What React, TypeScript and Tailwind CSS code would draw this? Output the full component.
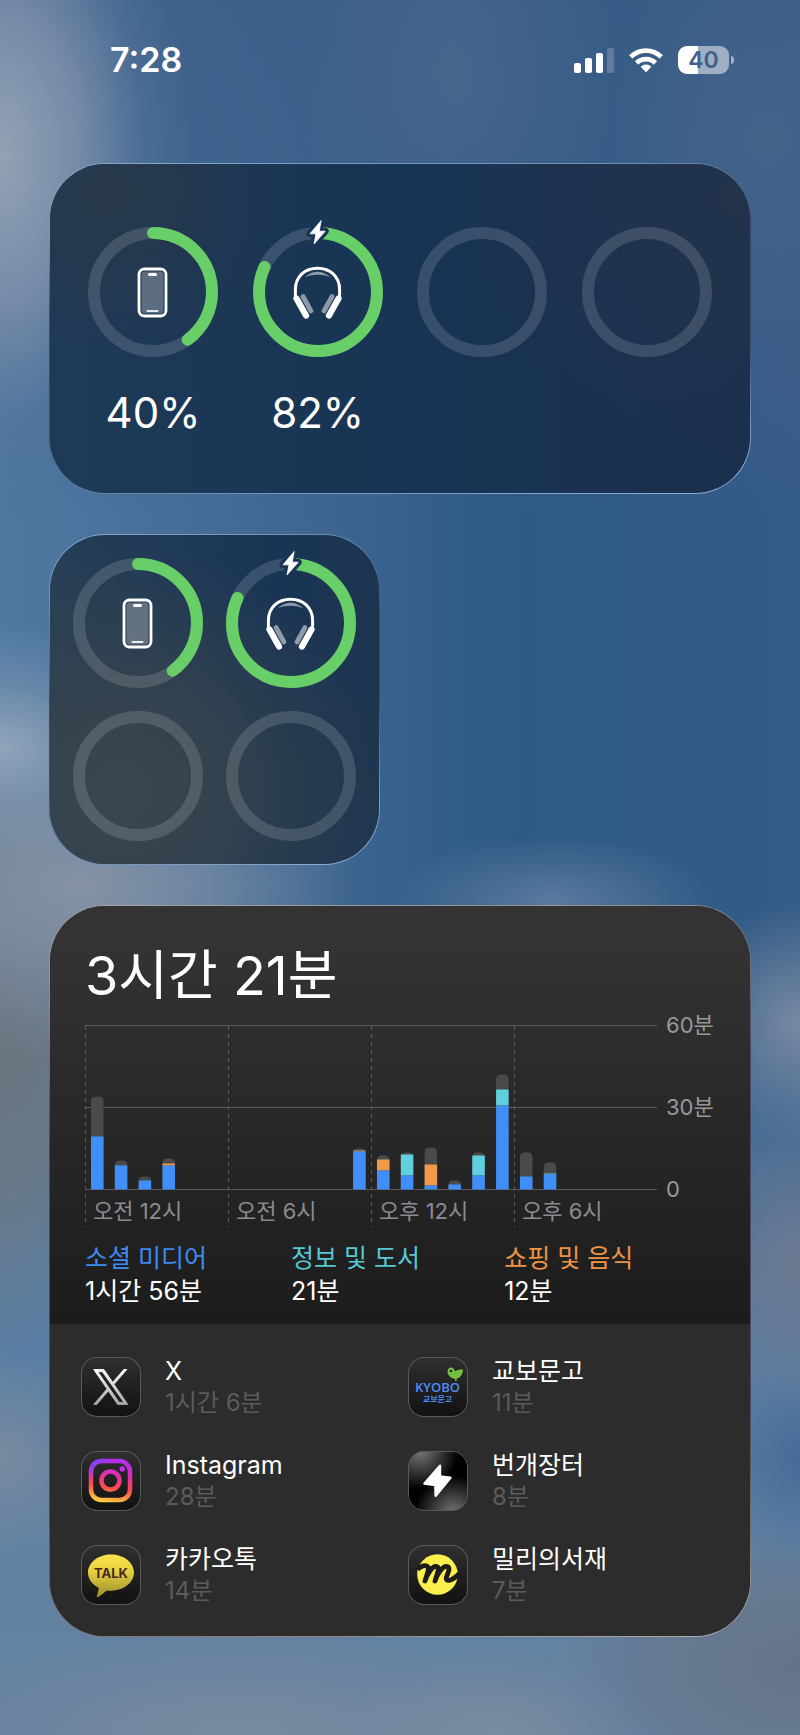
import type { ReactNode } from "react";

type Device = { id: string; level: number; charging?: boolean; icon: "phone" | "headphones" };

const devices: (Device | null)[] = [
  { id: "phone", level: 40, icon: "phone" },
  { id: "headphones", level: 82, charging: true, icon: "headphones" },
  null,
  null,
];

// heights in chart units, stacked from the baseline up
type Bar = { hour: number; social: number; info: number; shopping: number; other: number };

const bars: Bar[] = [
  { hour: 0, social: 53, info: 0, shopping: 0, other: 40 },
  { hour: 1, social: 24, info: 0, shopping: 0, other: 5 },
  { hour: 2, social: 9, info: 0, shopping: 0, other: 4 },
  { hour: 3, social: 24, info: 0, shopping: 2, other: 5 },
  { hour: 11, social: 38, info: 0, shopping: 1, other: 2 },
  { hour: 12, social: 19, info: 0, shopping: 11, other: 4 },
  { hour: 13, social: 14, info: 21, shopping: 0, other: 2 },
  { hour: 14, social: 4, info: 0, shopping: 21, other: 17 },
  { hour: 15, social: 5, info: 0, shopping: 0, other: 4 },
  { hour: 16, social: 14, info: 20, shopping: 0, other: 3 },
  { hour: 17, social: 84, info: 16, shopping: 0, other: 15 },
  { hour: 18, social: 13, info: 0, shopping: 0, other: 24 },
  { hour: 19, social: 15, info: 1, shopping: 0, other: 11 },
];

const categories = [
  { name: "소셜 미디어", time: "1시간 56분", color: "text-[#3d8bf2]" },
  { name: "정보 및 도서", time: "21분", color: "text-[#57c8d6]" },
  { name: "쇼핑 및 음식", time: "12분", color: "text-[#ee9445]" },
];

const apps: { name: string; time: string; icon: ReactNode }[] = [
  { name: "X", time: "1시간 6분", icon: <XIcon /> },
  { name: "교보문고", time: "11분", icon: <KyoboIcon /> },
  { name: "Instagram", time: "28분", icon: <InstagramIcon /> },
  { name: "번개장터", time: "8분", icon: <BungaeIcon /> },
  { name: "카카오톡", time: "14분", icon: <TalkIcon /> },
  { name: "밀리의서재", time: "7분", icon: <MillieIcon /> },
];

function StatusBar() {
  return (
    <header className="flex h-10 items-center justify-between pr-[17px] pl-[61px]">
      <span className="text-[34px] leading-10 font-semibold">7:28</span>
      <div className="flex items-center gap-[15px]">
        <svg width="40" height="26" viewBox="0 0 40 26" fill="#fff">
          <rect x="0" y="16" width="7" height="10" rx="2" />
          <rect x="11" y="11" width="7" height="15" rx="2" />
          <rect x="22" y="6" width="7" height="20" rx="2" />
          <rect x="33" y="1" width="7" height="25" rx="2" opacity=".2" />
        </svg>
        <svg width="34" height="26" viewBox="0 0 34 26" fill="none" stroke="#fff" strokeWidth="4.8">
          <path d="M1.7 9.9A21.6 21.6 0 0 1 32.3 9.9" />
          <path d="M7.6 16A13.2 13.2 0 0 1 26.4 16" />
          <path d="M17 25l-5-5.2a7.2 7.2 0 0 1 10 0z" fill="#fff" strokeWidth=".6" strokeLinejoin="round" />
        </svg>
        <div className="flex items-center gap-[2px]">
          <div className="flex h-7 w-[51px] items-center justify-center rounded-[9px] bg-linear-to-r from-white from-40% to-white/50 to-40% text-[23px] leading-7 font-semibold text-[#41618b]">
            40
          </div>
          <div className="h-2 w-[3px] rounded-r-full bg-white/50" />
        </div>
      </div>
    </header>
  );
}

function PhoneGlyph() {
  return (
    <g>
      <rect x="51" y="42" width="27" height="47" rx="5.5" fill="none" stroke="#fff" strokeWidth="2.8" />
      <rect x="53.5" y="44.5" width="22" height="42" rx="3" fill="#fff" fillOpacity=".27" />
      <rect x="60" y="46" width="9" height="3" rx="1.5" fill="#fff" />
      <rect x="58.5" y="83" width="12" height="2" rx="1" fill="#fff" fillOpacity=".85" />
    </g>
  );
}

function HeadphonesGlyph() {
  return (
    <g fill="none" stroke="#fff" strokeLinecap="round">
      <path d="M42.4 68V62.5C42.4 50 51.5 41.2 64.5 41.2S86.6 50 86.6 62.5V68" strokeWidth="3" />
      <path d="M51.8 50Q64.5 39.5 77.2 50 64.5 45.5 51.8 50Z" fill="#fff" stroke="none" opacity=".5" />
      <path d="M43.5 71.5L53 88.5M85.5 71.5L76 88.5" strokeWidth="6.2" />
      <path d="M50 69.5L58 84M79 69.5L71 84" strokeWidth="4.8" strokeOpacity=".5" />
    </g>
  );
}

function BatteryRing({ device }: { device: Device | null }) {
  return (
    <svg width="130" height="130" viewBox="0 0 130 130" fill="none" className="overflow-visible">
      <circle cx="65" cy="65" r="59" stroke="#fff" strokeOpacity=".14" strokeWidth="12" />
      {device && (
        <circle
          cx="65"
          cy="65"
          r="59"
          stroke="#68ce67"
          strokeWidth="12"
          strokeLinecap="round"
          pathLength={100}
          strokeDasharray={`${device.level} 100`}
          transform="rotate(-90 65 65)"
        />
      )}
      {device?.charging && (
        <g strokeLinejoin="round">
          <path d="M68.2-6.500L57 6.800H63L61 17 72.200 4.200H66.200Z" fill="#1b3554" stroke="#1b3554" strokeWidth="7" />
          <path d="M68.2-6.500L57 6.800H63L61 17 72.200 4.200H66.200Z" fill="#fff" stroke="#fff" strokeWidth=".8" />
        </g>
      )}
      {device?.icon === "phone" && <PhoneGlyph />}
      {device?.icon === "headphones" && <HeadphonesGlyph />}
    </svg>
  );
}

function BatteriesWide() {
  return (
    <section className="flex justify-between rounded-[56px] border border-transparent px-[38px] pt-[63px] pb-[56px] [background:radial-gradient(ellipse_26%_50%_at_8%_8%,#28384b,transparent)_padding-box,radial-gradient(ellipse_40%_80%_at_98%_10%,#23334c,transparent)_padding-box,linear-gradient(90deg,#1f3a56,#183454_50%,#1a304e)_padding-box,linear-gradient(172deg,#8aa9cd,#6f90b8_18%,#35506f_36%,#35506f_64%,#6f90b8_82%,#8fb0d6)_border-box]">
      {devices.map((device, i) => (
        <div key={device?.id ?? i} className="flex flex-col items-center gap-8">
          <BatteryRing device={device} />
          <span className="h-12 text-[42px] leading-12">{device && `${device.level}%`}</span>
        </div>
      ))}
    </section>
  );
}

function BatteriesSmall() {
  return (
    <section className="grid w-fit grid-cols-2 gap-[23px] rounded-[56px] border border-transparent p-[23px] [background:radial-gradient(ellipse_80%_75%_at_22%_78%,#3b474e,#36434dcc_45%,transparent)_padding-box,linear-gradient(100deg,#263f57,#193555_60%,#20354f)_padding-box,linear-gradient(165deg,#8aa9cd,#6485ab_22%,#33506f_40%,#33506f_60%,#6f90b8_80%,#8fb0d6)_border-box]">
      {devices.map((device, i) => (
        <BatteryRing key={device?.id ?? i} device={device} />
      ))}
    </section>
  );
}

function UsageBar({ bar }: { bar: Bar }) {
  const x = bar.hour * 23.83 + 6;
  const total = bar.social + bar.info + bar.shopping + bar.other;
  return (
    <g>
      <path d={`M${x} 175.5v${5 - total}q0-5 5-5h2.5q5 0 5 5v${total - 5}z`} fill="#4a4a4a" />
      <rect x={x} y={175.5 - bar.social - bar.info - bar.shopping} width="12.5" height={bar.shopping} fill="#f29a4a" />
      <rect x={x} y={175.5 - bar.social - bar.info} width="12.5" height={bar.info} fill="#61d0de" />
      <rect x={x} y={175.5 - bar.social} width="12.5" height={bar.social} fill="#408ff8" />
    </g>
  );
}

function UsageChart() {
  return (
    <svg viewBox="0 -10 630 223" className="block w-full text-[22px]" fill="#98989d">
      <g stroke="#5c5c5e">
        <path d="M0 11.5H572M0 93.5H572M0 175.5H572" />
        <path d="M.5 12V213M143.5 12V213M286.5 12V213M429.5 12V213" strokeDasharray="4 4" />
      </g>
      {bars.map((bar) => (
        <UsageBar key={bar.hour} bar={bar} />
      ))}
      <text x="581" y="19">60분</text>
      <text x="581" y="101">30분</text>
      <text x="581" y="183">0</text>
      <g fill="#8b8b90">
        <text x="8" y="205">오전 12시</text>
        <text x="151" y="205">오전 6시</text>
        <text x="294" y="205">오후 12시</text>
        <text x="437" y="205">오후 6시</text>
      </g>
    </svg>
  );
}

function XIcon() {
  return (
    <svg width="60" height="60" viewBox="0 0 60 60">
      <defs>
        <linearGradient id="x-fill" x2="0" y2="1">
          <stop stopColor="#fff" />
          <stop offset="1" stopColor="#a8a8a8" />
        </linearGradient>
      </defs>
      <path
        transform="translate(12.7 12.5) scale(.0285)"
        fill="url(#x-fill)"
        stroke="url(#x-fill)"
        strokeWidth="30"
        d="M714.163 519.284L1160.89 0H1055.03L667.137 450.887L357.328 0H0L468.492 681.821L0 1226.37H105.866L515.491 750.218L842.672 1226.37H1200L714.137 519.284ZM569.165 687.828L521.697 619.934L144.011 79.694H306.615L611.412 515.685L658.88 583.579L1055.08 1150.3H892.476L569.165 687.854Z"
      />
    </svg>
  );
}

function InstagramIcon() {
  return (
    <svg width="60" height="60" viewBox="0 0 60 60" fill="none">
      <defs>
        <linearGradient id="ig-a" gradientUnits="userSpaceOnUse" x1="36" y1="8" x2="28" y2="52">
          <stop stopColor="#b02cf5" />
          <stop offset=".35" stopColor="#e02cb0" />
          <stop offset=".65" stopColor="#fb4a4f" />
          <stop offset="1" stopColor="#ffd23f" />
        </linearGradient>
        <radialGradient id="ig-b" gradientUnits="userSpaceOnUse" cx="10" cy="9" r="20">
          <stop stopColor="#6a4bff" />
          <stop offset="1" stopColor="#6a4bff" stopOpacity="0" />
        </radialGradient>
      </defs>
      {["url(#ig-a)", "url(#ig-b)"].map((paint) => (
        <rect key={paint} x="10" y="10" width="39" height="39" rx="10.5" stroke={paint} strokeWidth="4.5" />
      ))}
      <circle cx="29.5" cy="29.5" r="9" stroke="url(#ig-a)" strokeWidth="4.5" />
      <circle cx="41.3" cy="18" r="2.7" fill="#c22df0" />
    </svg>
  );
}

function TalkIcon() {
  return (
    <svg width="60" height="60" viewBox="0 0 60 60">
      <defs>
        <linearGradient id="talk-fill" x2="0" y2="1">
          <stop stopColor="#fbe54a" />
          <stop offset=".4" stopColor="#e3cf40" />
          <stop offset="1" stopColor="#9c8f2c" />
        </linearGradient>
      </defs>
      <path
        fill="url(#talk-fill)"
        d="M30 9.5C17.3 9.5 7 17.5 7 27.6c0 6.5 4.3 12.2 10.8 15.4-.5 2.700-1.200 5.600-2 8.200-.2.7.5 1.200 1.200.8 3-1.800 6-4.100 8.800-6.600 1.400.2 2.800.3 4.200.3 12.700 0 23-8 23-18.100S42.700 9.500 30 9.500z"
      />
      <text x="30" y="33" textAnchor="middle" className="text-[13px] font-bold" fill="#43291f">TALK</text>
    </svg>
  );
}

function KyoboIcon() {
  return (
    <svg width="60" height="60" viewBox="0 0 60 60">
      <path
        fill="#76be3f"
        d="M39.5 14.2c0-2.2 1.5-3.700 3.500-3.700 2.400 0 3.400 1.800 4 3.900 1.500-1.400 4-1.900 8-1.900-.2 4.600-2.600 8.400-6.300 9.100l-.1 2.400h-1.400l-.2-2.300c-4.500-.3-7.500-3.600-7.500-7.500z"
      />
      <circle cx="43" cy="14" r="1.3" fill="#262626" />
      <text x="29.5" y="35" textAnchor="middle" className="font-['Open_Sans'] text-[13px] font-semibold" fill="#4f8df5">KYOBO</text>
      <text x="29.5" y="45" textAnchor="middle" className="text-[8px] font-bold" fill="#4f8df5">교보문고</text>
    </svg>
  );
}

function BungaeIcon() {
  return (
    <svg width="60" height="60" viewBox="0 0 60 60">
      <path
        d="M32 14.8L16.5 32.6 27.3 34 27.7 44.7 42.4 26.8 31.9 25.5Z"
        fill="#fff"
        stroke="#fff"
        strokeWidth="2.5"
        strokeLinejoin="round"
      />
    </svg>
  );
}

function MillieIcon() {
  return (
    <svg width="60" height="60" viewBox="0 0 60 60" fill="none">
      <circle cx="29.5" cy="29.5" r="20.3" fill="#fdf04c" />
      <path
        d="M9.5 24.5C13 20.5 18 19.5 20 22c1.5 2.5-1.5 8-3 14 2.5-7.5 7-15 11.5-14.5 4 .7.5 7-1.5 14.5 2.5-7.500 7.500-15 12-14.500 4.500.7 0 8-.8 11.500-.7 4 5.300 3.500 13.300-4.500"
        stroke="#1c1c1c"
        strokeWidth="4.8"
        strokeLinejoin="round"
      />
    </svg>
  );
}

function ScreenTime() {
  return (
    <section className="rounded-[56px] border border-transparent [background:linear-gradient(#323232,#2c2c2c)_padding-box,linear-gradient(172deg,#a5a5a7,#8a8a8d_12%,#4a4f57_28%,#4a4f57_72%,#77706d_88%,#b0b0b2)_border-box]">
      <div className="rounded-t-[55px] bg-linear-to-b from-[#333333] from-10% to-[#1c1c1d] px-[35px] pt-[41px] pb-4">
        <h1 className="text-[54px] leading-[57px]">3시간 21분</h1>
        <UsageChart />
        <dl className="mt-[15px] flex gap-[84px] leading-[33px]">
          {categories.map((c) => (
            <div key={c.name}>
              <dt className={`text-[25px] ${c.color}`}>{c.name}</dt>
              <dd className="text-[25px]">{c.time}</dd>
            </div>
          ))}
        </dl>
      </div>
      <ul className="grid grid-cols-2 gap-y-[34px] rounded-b-[55px] bg-[#2c2c2c] pt-[33px] pr-[15px] pb-[31px] pl-[31px]">
        {apps.map((app) => (
          <li key={app.name} className="flex h-[60px] items-center gap-6">
            <div
              className={`size-[60px] shrink-0 rounded-[16px] shadow-[inset_0_0_0_1px_#5a5a5a] ${
                app.name === "번개장터"
                  ? "bg-[radial-gradient(circle_at_20%_0%,#777,transparent_50%),radial-gradient(circle_at_75%_105%,#777,transparent_50%)] bg-black"
                  : "bg-linear-to-b from-[#303030] to-[#111111]"
              }`}
            >
              {app.icon}
            </div>
            <div className="leading-[31px]">
              <p className="text-[25px]">{app.name}</p>
              <p className="text-[24px] text-[#5b5b5e]">{app.time}</p>
            </div>
          </li>
        ))}
      </ul>
    </section>
  );
}

// blurred wallpaper, one soft spot per gradient
const wallpaper =
  "[background:radial-gradient(ellipse_24%_20%_at_0%_9%,#93a2b6,#8595aecc_40%,#6a84a444_75%,transparent),radial-gradient(ellipse_20%_14%_at_57%_4%,#4b678ccc,transparent),radial-gradient(ellipse_20%_12%_at_96%_8%,#4a648acc,transparent),radial-gradient(ellipse_14%_10%_at_100%_20%,#405b88aa,transparent),radial-gradient(ellipse_22%_7%_at_0%_43%,#8fa5bc,#7d97b388_50%,transparent),radial-gradient(ellipse_35%_10%_at_10%_51%,#8592a5,#8090a6aa_45%,transparent),radial-gradient(ellipse_20%_4%_at_69%_52%,#5b7a9f,transparent),radial-gradient(ellipse_18%_20%_at_0%_58%,#68747e,#6b7782dd_50%,transparent),radial-gradient(ellipse_14%_7%_at_100%_59%,#7889a2,transparent),radial-gradient(ellipse_14%_9%_at_100%_73%,#6c7890,transparent),radial-gradient(ellipse_12%_6%_at_100%_84%,#456b98,transparent),radial-gradient(ellipse_14%_6%_at_0%_84%,#778a9f,transparent),radial-gradient(ellipse_30%_8%_at_100%_96%,#64738a,#66768ccc_50%,transparent),radial-gradient(ellipse_40%_6%_at_30%_100%,#798a9f,transparent),radial-gradient(ellipse_20%_5%_at_62%_100%,#7a8b9f,transparent),linear-gradient(#3a5d87bb,#3a5f8a99_15%,transparent_30%,transparent_55%,#5b7fa4_78%,#6682a0),linear-gradient(90deg,#5079a2,#416893_35%,#2d5984_65%,#345c87)]";

export default function App() {
  return (
    <main
      className={`min-h-screen px-[49px] pt-10 pb-[99px] font-['Inter','Noto_Sans_CJK_KR',sans-serif] text-white ${wallpaper}`}
    >
      <StatusBar />
      <div className="mt-[83px] flex flex-col gap-10">
        <BatteriesWide />
        <BatteriesSmall />
        <ScreenTime />
      </div>
    </main>
  );
}
